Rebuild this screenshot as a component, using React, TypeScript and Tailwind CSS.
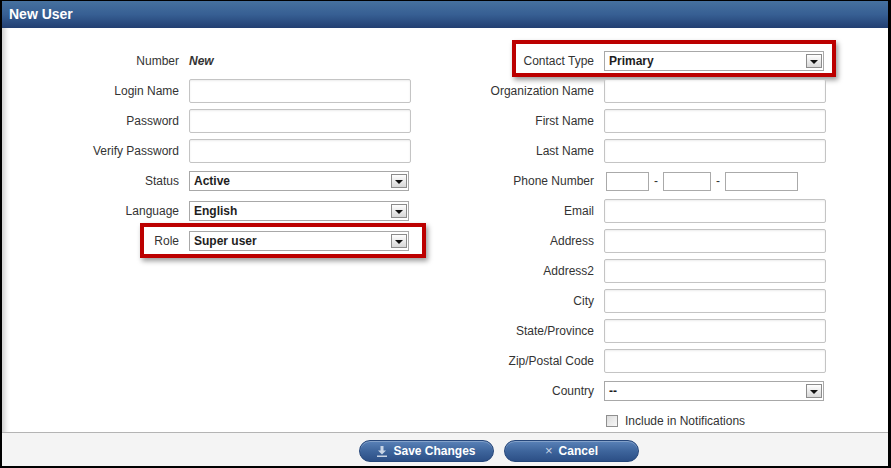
import React from "react";

const FONT = "font-['Liberation_Sans',Arial,sans-serif]";

function TextInput() {
  return (
    <div className="h-[24px] w-[222px] rounded-[2px] border border-[#c4c4c4] bg-white shadow-[inset_0_1px_2px_rgba(0,0,0,0.08)]" />
  );
}

function Select({ value }: { value: string }) {
  return (
    <div className="flex h-[20px] w-[220px] items-center justify-between border border-[#a8a8a8] bg-white pl-[4px] pr-[1px]">
      <span className="text-[12px] font-bold text-[#1e1e1e]">{value}</span>
      <span className="flex h-[14px] w-[16px] items-center justify-center border border-[#8c8c8c] bg-gradient-to-b from-white to-[#d8d8d8]">
        <span className="mt-[1px] h-0 w-0 border-x-[4px] border-t-[4px] border-x-transparent border-t-[#111]" />
      </span>
    </div>
  );
}

function Highlight({ className }: { className: string }) {
  return (
    <div
      className={`pointer-events-none absolute border-4 border-[#bc0000] shadow-[2px_3px_5px_rgba(0,0,0,0.4)] ${className}`}
    />
  );
}

function Row({
  label,
  labelWidth,
  children,
  overlay,
}: {
  label: string;
  labelWidth: string;
  children?: React.ReactNode;
  overlay?: React.ReactNode;
}) {
  return (
    <div className="relative flex h-[30px] shrink-0 items-center gap-[10px]">
      <span className={`${labelWidth} text-right text-[12px] text-[#333]`}>{label}</span>
      {children}
      {overlay}
    </div>
  );
}

function DownloadIcon() {
  return (
    <svg width="10" height="11" viewBox="0 0 10 11" className="text-[#c9d5e6]">
      <path d="M3.5 0h3v4.5h2.5L5 8.5 1 4.5h2.5z" fill="currentColor" />
      <rect x="0" y="9.5" width="10" height="1.5" fill="currentColor" />
    </svg>
  );
}

function FooterButton({ icon, label }: { icon: React.ReactNode; label: string }) {
  return (
    <button className="flex h-[22px] w-[135px] items-center justify-center gap-[6px] rounded-full border border-[#25467a] bg-gradient-to-b from-[#5a82b8] via-[#3e659c] to-[#2c4f86] text-[12px] font-bold text-white shadow-[inset_0_1px_0_rgba(255,255,255,0.25)]">
      {icon}
      <span>{label}</span>
    </button>
  );
}

export default function App() {
  const left = "w-[177px]";
  const right = "w-[183px]";

  return (
    <div
      className={`${FONT} flex h-[468px] w-[891px] flex-col overflow-hidden border-t border-b-2 border-l-2 border-r-[3px] border-black`}
    >
      {/* Title bar */}
      <div className="flex h-[27px] shrink-0 items-center bg-gradient-to-b from-[#46719f] via-[#375f93] to-[#223f72] px-[7px]">
        <span className="text-[14px] font-bold text-white">New User</span>
      </div>

      <div className="flex flex-1 flex-col shadow-[inset_7px_0_5px_-4px_rgba(0,0,0,0.2)]">
        {/* Form */}
        <div className="flex h-[404px] shrink-0 pt-[18px]">
          <div className="flex flex-col">
            <Row label="Number" labelWidth={left}>
              <span className="text-[12px] font-bold italic text-[#333]">New</span>
            </Row>
            <Row label="Login Name" labelWidth={left}>
              <TextInput />
            </Row>
            <Row label="Password" labelWidth={left}>
              <TextInput />
            </Row>
            <Row label="Verify Password" labelWidth={left}>
              <TextInput />
            </Row>
            <Row label="Status" labelWidth={left}>
              <Select value="Active" />
            </Row>
            <Row label="Language" labelWidth={left}>
              <Select value="English" />
            </Row>
            <Row
              label="Role"
              labelWidth={left}
              overlay={<Highlight className="-top-[3px] -bottom-[2px] left-[138px] -right-[15px]" />}
            >
              <Select value="Super user" />
            </Row>
          </div>

          <div className="flex flex-col">
            <Row
              label="Contact Type"
              labelWidth={right}
              overlay={<Highlight className="-top-[6px] -bottom-[1px] left-[101px] -right-[10px]" />}
            >
              <Select value="Primary" />
            </Row>
            <Row label="Organization Name" labelWidth={right}>
              <TextInput />
            </Row>
            <Row label="First Name" labelWidth={right}>
              <TextInput />
            </Row>
            <Row label="Last Name" labelWidth={right}>
              <TextInput />
            </Row>
            <Row label="Phone Number" labelWidth={right}>
              <div className="ml-[2px] flex items-center text-[12px] text-[#333]">
                <div className="h-[19px] w-[43px] border border-[#aaa] bg-white" />
                <span className="w-[14px] text-center">-</span>
                <div className="h-[19px] w-[48px] border border-[#aaa] bg-white" />
                <span className="w-[14px] text-center">-</span>
                <div className="h-[19px] w-[73px] border border-[#aaa] bg-white" />
              </div>
            </Row>
            <Row label="Email" labelWidth={right}>
              <TextInput />
            </Row>
            <Row label="Address" labelWidth={right}>
              <TextInput />
            </Row>
            <Row label="Address2" labelWidth={right}>
              <TextInput />
            </Row>
            <Row label="City" labelWidth={right}>
              <TextInput />
            </Row>
            <Row label="State/Province" labelWidth={right}>
              <TextInput />
            </Row>
            <Row label="Zip/Postal Code" labelWidth={right}>
              <TextInput />
            </Row>
            <Row label="Country" labelWidth={right}>
              <Select value="--" />
            </Row>
            <Row label="" labelWidth={right}>
              <label className="ml-[2px] flex items-center gap-[7px] text-[12px] text-[#333]">
                <span className="h-[12px] w-[12px] border border-[#8f8f8f] bg-gradient-to-br from-[#dcdcdc] to-[#f8f8f8]" />
                Include in Notifications
              </label>
            </Row>
          </div>
        </div>

        {/* Footer */}
        <div className="relative flex h-[34px] shrink-0 gap-[10px] border-t border-[#b4b4b4] bg-[#f4f4f4] pl-[357px] pt-[7px]">
          <FooterButton icon={<DownloadIcon />} label="Save Changes" />
          <FooterButton icon={<span className="text-[13px] font-normal text-[#c9d5e6]">×</span>} label="Cancel" />
        </div>
      </div>
    </div>
  );
}
